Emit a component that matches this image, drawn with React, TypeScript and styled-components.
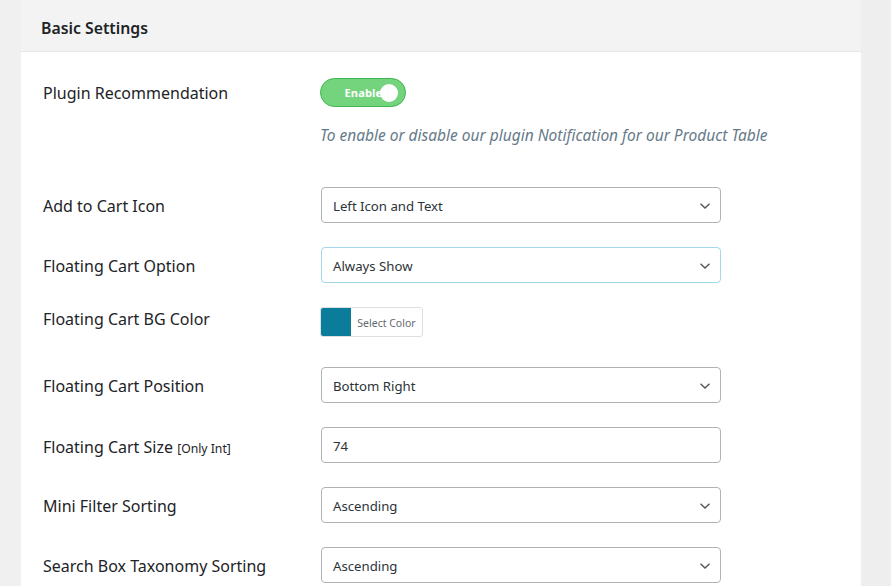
import React from "react";
import styled, { createGlobalStyle } from "styled-components";

const Global = createGlobalStyle`
  html, body { margin: 0; padding: 0; background: #f0f0f1; }
  body { font-family: "Noto Sans", "Open Sans", sans-serif; width: 891px; height: 586px; overflow: hidden; }
`;

const Page = styled.div`
  display: flex;
  height: 586px;
  background: #f0f0f0;
`;

const LeftGutter = styled.div`
  width: 21px;
  flex: none;
  background: #f0f0f0;
`;

const RightGutter = styled.div`
  width: 30px;
  flex: none;
  background: #eeeeee;
`;

const Panel = styled.div`
  flex: 1;
  background: #ffffff;
  display: flex;
  flex-direction: column;
`;

const Header = styled.div`
  height: 52px;
  background: #f3f3f3;
  border-bottom: 1px solid #e6e6e6;
  display: flex;
  align-items: center;
  padding: 4px 0 0 20px;
  box-sizing: border-box;
  font-size: 15.8px;
  font-weight: 600;
  color: #1d2327;
`;

const Body = styled.div`
  display: flex;
  flex-direction: column;
  gap: 24px;
  padding: 26px 0 0 22px;
`;

const Row = styled.div<{ $align?: string }>`
  display: grid;
  grid-template-columns: 278px 400px;
  align-items: ${(p) => p.$align || "center"};
`;

const Label = styled.div<{ $pad?: number }>`
  font-size: 16px;
  line-height: 22px;
  color: #1d2327;
  padding-top: ${(p) => p.$pad || 0}px;
  white-space: nowrap;
`;

const Small = styled.span`
  font-size: 12.2px;
`;

const ToggleCol = styled.div`
  display: flex;
  flex-direction: column;
  align-items: flex-start;
  margin-left: -1px;
  padding-bottom: 16px;
`;

const Toggle = styled.div`
  width: 86px;
  height: 29px;
  box-sizing: border-box;
  border-radius: 15px;
  border: 1px solid #3fb64d;
  background: #74d47e;
  display: flex;
  align-items: center;
  justify-content: flex-end;
  padding-right: 7px;
`;

const ToggleText = styled.span`
  color: #ffffff;
  font-size: 11px;
  font-weight: 700;
  font-family: "Open Sans", sans-serif;
  margin-right: -2px;
  letter-spacing: 0.1px;
`;

const Knob = styled.span`
  width: 18px;
  height: 18px;
  border-radius: 50%;
  background: #ffffff;
`;

const Desc = styled.div`
  margin-top: 16px;
  font-size: 15.5px;
  font-style: italic;
  color: #667a89;
  white-space: nowrap;
  line-height: 24px;
`;

const SelectBox = styled.div<{ $focus?: boolean }>`
  height: 36px;
  box-sizing: border-box;
  border: 1px solid ${(p) => (p.$focus ? "#a3d7ea" : "#b0b3b6")};
  border-radius: 4px;
  display: flex;
  align-items: center;
  justify-content: space-between;
  padding: 2px 9px 0 11px;
  font-size: 13.2px;
  color: #2c3338;
  background: #fff;
`;

const Chevron = () => (
  <svg width="12" height="8" viewBox="0 0 12 8">
    <path d="M1.5 1.8 L6 6 L10.5 1.8" fill="none" stroke="#50575e" strokeWidth="1.4" />
  </svg>
);

const ColorPicker = styled.div`
  display: flex;
  height: 30px;
  width: 103px;
  box-sizing: border-box;
  border: 1px solid #dcdfe3;
  border-radius: 3px;
  overflow: hidden;
  margin: 0 0 6px -1px;
`;

const Swatch = styled.div`
  width: 30px;
  background: #0b7c99;
`;

const ColorText = styled.div`
  flex: 1;
  display: flex;
  align-items: center;
  justify-content: center;
  padding-top: 1px;
  font-size: 10.5px;
  color: #646970;
`;

const Select = ({ value, focus }: { value: string; focus?: boolean }) => (
  <SelectBox $focus={focus}>
    <span>{value}</span>
    <Chevron />
  </SelectBox>
);

export default function App() {
  return (
    <>
      <Global />
      <Page>
        <LeftGutter />
        <Panel>
          <Header>Basic Settings</Header>
          <Body>
            <Row $align="start">
              <Label $pad={4}>Plugin Recommendation</Label>
              <ToggleCol>
                <Toggle>
                  <ToggleText>Enable</ToggleText>
                  <Knob />
                </Toggle>
                <Desc>To enable or disable our plugin Notification for our Product Table</Desc>
              </ToggleCol>
            </Row>
            <Row>
              <Label $pad={2}>Add to Cart Icon</Label>
              <Select value="Left Icon and Text" />
            </Row>
            <Row>
              <Label $pad={2}>Floating Cart Option</Label>
              <Select value="Always Show" focus />
            </Row>
            <Row $align="start">
              <Label $pad={1}>Floating Cart BG Color</Label>
              <ColorPicker>
                <Swatch />
                <ColorText>Select Color</ColorText>
              </ColorPicker>
            </Row>
            <Row>
              <Label $pad={2}>Floating Cart Position</Label>
              <Select value="Bottom Right" />
            </Row>
            <Row>
              <Label $pad={6}>
                Floating Cart Size <Small>[Only Int]</Small>
              </Label>
              <SelectBox>
                <span>74</span>
              </SelectBox>
            </Row>
            <Row>
              <Label $pad={2}>Mini Filter Sorting</Label>
              <Select value="Ascending" />
            </Row>
            <Row>
              <Label $pad={2}>Search Box Taxonomy Sorting</Label>
              <Select value="Ascending" />
            </Row>
          </Body>
        </Panel>
        <RightGutter />
      </Page>
    </>
  );
}
